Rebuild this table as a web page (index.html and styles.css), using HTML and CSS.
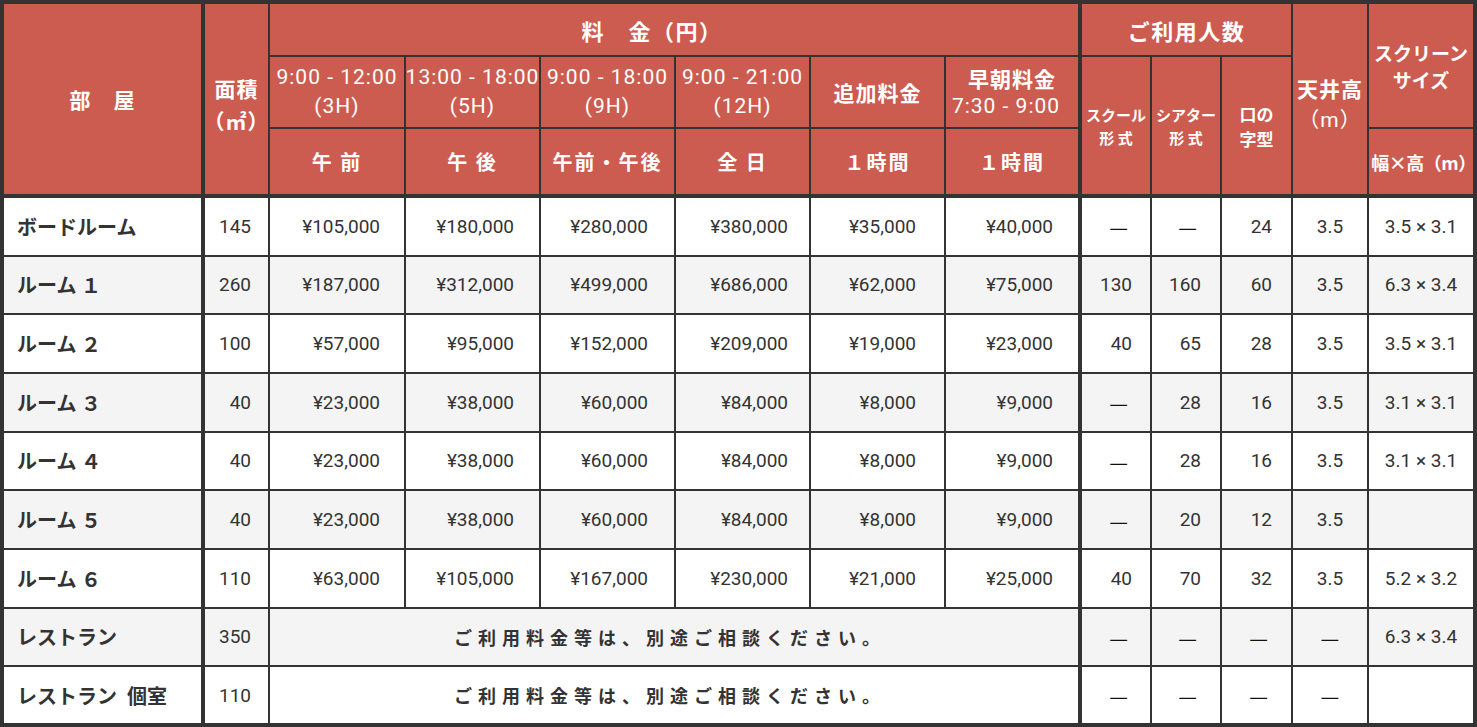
FILE: index.html
```html
<!DOCTYPE html>
<html lang="ja">
<head>
<meta charset="utf-8">
<title>料金表</title>
<link rel="stylesheet" href="styles.css">
</head>
<body>
<div class="rates">
  <div class="head">
    <div class="cell hd tr tb g-room big">部　屋</div>
    <div class="cell hd tb g-area big low">面積<br>（㎡）</div>
    <div class="cell hd tr g-fee top fee">料　金（円）</div>
    <div class="cell hd g-cap top">ご利用人数</div>
    <div class="cell hd tb g-ceil big low">天井高<br><span class="lat">（m）</span></div>
    <div class="cell hd nr g-scr scr">スクリーン<br>サイズ</div>

    <div class="cell hd r2 k3 time">9:00 - 12:00<br>(3H)</div>
    <div class="cell hd r2 k4 time">13:00 - 18:00<br>(5H)</div>
    <div class="cell hd r2 k5 time">9:00 - 18:00<br>(9H)</div>
    <div class="cell hd r2 k6 time">9:00 - 21:00<br>(12H)</div>
    <div class="cell hd r2 k7 big">追加料金</div>
    <div class="cell hd tr r2 k8 big early">早朝料金<br><span class="lat">7:30 - 9:00</span></div>
    <div class="cell hd tb r23 k9 tiny">スクール<br>形 式</div>
    <div class="cell hd tb r23 k10 tiny">シアター<br>形 式</div>
    <div class="cell hd tb r23 k11 small">口の<br>字型</div>

    <div class="cell hd tb r3 k3 sub">午 前</div>
    <div class="cell hd tb r3 k4 sub">午 後</div>
    <div class="cell hd tb r3 k5 sub">午前・午後</div>
    <div class="cell hd tb r3 k6 sub">全 日</div>
    <div class="cell hd tb r3 k7 sub">１時間</div>
    <div class="cell hd tr tb r3 k8 sub">１時間</div>
    <div class="cell hd tb nr r3 k13 wh">幅×高（m）</div>
  </div>

  <div class="row">
    <div class="cell nm">ボードルーム</div><div class="cell ar">145</div>
    <div class="cell p1">¥105,000</div><div class="cell p2">¥180,000</div><div class="cell p3">¥280,000</div><div class="cell p4">¥380,000</div><div class="cell p5">¥35,000</div><div class="cell p6">¥40,000</div>
    <div class="cell s1 dash">—</div><div class="cell s2 dash">—</div><div class="cell s3">24</div><div class="cell ce">3.5</div><div class="cell sc">3.5 × 3.1</div>
  </div>
  <div class="row alt">
    <div class="cell nm">ルーム １</div><div class="cell ar">260</div>
    <div class="cell p1">¥187,000</div><div class="cell p2">¥312,000</div><div class="cell p3">¥499,000</div><div class="cell p4">¥686,000</div><div class="cell p5">¥62,000</div><div class="cell p6">¥75,000</div>
    <div class="cell s1">130</div><div class="cell s2">160</div><div class="cell s3">60</div><div class="cell ce">3.5</div><div class="cell sc">6.3 × 3.4</div>
  </div>
  <div class="row">
    <div class="cell nm">ルーム ２</div><div class="cell ar">100</div>
    <div class="cell p1">¥57,000</div><div class="cell p2">¥95,000</div><div class="cell p3">¥152,000</div><div class="cell p4">¥209,000</div><div class="cell p5">¥19,000</div><div class="cell p6">¥23,000</div>
    <div class="cell s1">40</div><div class="cell s2">65</div><div class="cell s3">28</div><div class="cell ce">3.5</div><div class="cell sc">3.5 × 3.1</div>
  </div>
  <div class="row alt">
    <div class="cell nm">ルーム ３</div><div class="cell ar">40</div>
    <div class="cell p1">¥23,000</div><div class="cell p2">¥38,000</div><div class="cell p3">¥60,000</div><div class="cell p4">¥84,000</div><div class="cell p5">¥8,000</div><div class="cell p6">¥9,000</div>
    <div class="cell s1 dash">—</div><div class="cell s2">28</div><div class="cell s3">16</div><div class="cell ce">3.5</div><div class="cell sc">3.1 × 3.1</div>
  </div>
  <div class="row">
    <div class="cell nm">ルーム ４</div><div class="cell ar">40</div>
    <div class="cell p1">¥23,000</div><div class="cell p2">¥38,000</div><div class="cell p3">¥60,000</div><div class="cell p4">¥84,000</div><div class="cell p5">¥8,000</div><div class="cell p6">¥9,000</div>
    <div class="cell s1 dash">—</div><div class="cell s2">28</div><div class="cell s3">16</div><div class="cell ce">3.5</div><div class="cell sc">3.1 × 3.1</div>
  </div>
  <div class="row alt">
    <div class="cell nm">ルーム ５</div><div class="cell ar">40</div>
    <div class="cell p1">¥23,000</div><div class="cell p2">¥38,000</div><div class="cell p3">¥60,000</div><div class="cell p4">¥84,000</div><div class="cell p5">¥8,000</div><div class="cell p6">¥9,000</div>
    <div class="cell s1 dash">—</div><div class="cell s2">20</div><div class="cell s3">12</div><div class="cell ce">3.5</div><div class="cell sc"></div>
  </div>
  <div class="row">
    <div class="cell nm">ルーム ６</div><div class="cell ar">110</div>
    <div class="cell p1">¥63,000</div><div class="cell p2">¥105,000</div><div class="cell p3">¥167,000</div><div class="cell p4">¥230,000</div><div class="cell p5">¥21,000</div><div class="cell p6">¥25,000</div>
    <div class="cell s1">40</div><div class="cell s2">70</div><div class="cell s3">32</div><div class="cell ce">3.5</div><div class="cell sc">5.2 × 3.2</div>
  </div>
  <div class="row alt">
    <div class="cell nm">レストラン</div><div class="cell ar">350</div>
    <div class="cell note">ご利用料金等は、別途ご相談ください。</div>
    <div class="cell s1 dash">—</div><div class="cell s2 dash">—</div><div class="cell s3 dash">—</div><div class="cell ce dash">—</div><div class="cell sc">6.3 × 3.4</div>
  </div>
  <div class="row last">
    <div class="cell nm">レストラン&ensp;個室</div><div class="cell ar">110</div>
    <div class="cell note">ご利用料金等は、別途ご相談ください。</div>
    <div class="cell s1 dash">—</div><div class="cell s2 dash">—</div><div class="cell s3 dash">—</div><div class="cell ce dash">—</div><div class="cell sc"></div>
  </div>
</div>
</body>
</html>
```
FILE: styles.css
```css
* {
  box-sizing: border-box;
}

body {
  margin: 0;
  background: #ffffff;
  font-family: Roboto, "Noto Sans CJK JP", sans-serif;
  color: #333333;
}

.rates {
  display: grid;
  width: 1477px;
  height: 727px;
  border: 4px solid #333333;
  grid-template-columns: 201px 65px 136px 135px 135px 135px 135px 136px 70px 70px 71px 76px 104px;
  grid-template-rows: 53px 72px 69px repeat(8, 58.67px) 1fr;
}

.head,
.row {
  display: contents;
}

.cell {
  display: flex;
  align-items: center;
  justify-content: center;
  text-align: center;
  border-right: 2px solid #333333;
  border-bottom: 2px solid #333333;
  font-size: 19px;
  background: #ffffff;
  white-space: nowrap;
}

.row.alt .cell {
  background: #f4f4f4;
}

.row.last .cell {
  border-bottom: 0;
}

.tr {
  border-right-width: 4px;
}

.tb {
  border-bottom-width: 4px;
}

.nr {
  border-right: 0;
}

/* header */
.hd {
  background: #cd5c50;
  color: #ffffff;
  font-weight: 700;
  flex-direction: column;
  font-family: "Noto Sans CJK JP", sans-serif;
}

.hd .lat {
  font-family: Roboto, "Noto Sans CJK JP", sans-serif;
  font-weight: 400;
}

.g-room { grid-column: 1; grid-row: 1 / 4; }
.g-area { grid-column: 2; grid-row: 1 / 4; }
.g-fee { grid-column: 3 / 9; grid-row: 1; }
.g-cap { grid-column: 9 / 12; grid-row: 1; }
.g-ceil { grid-column: 12; grid-row: 1 / 4; }
.g-scr { grid-column: 13; grid-row: 1 / 3; }

.r2 { grid-row: 2; }
.r3 { grid-row: 3; }
.r23 { grid-row: 2 / 4; }
.k3 { grid-column: 3; }
.k4 { grid-column: 4; }
.k5 { grid-column: 5; }
.k6 { grid-column: 6; }
.k7 { grid-column: 7; }
.k8 { grid-column: 8; }
.k9 { grid-column: 9; }
.k10 { grid-column: 10; }
.k11 { grid-column: 11; }
.k13 { grid-column: 13; }

.big {
  font-size: 21px;
  line-height: 32px;
  letter-spacing: 1px;
}

.low {
  padding-top: 10px;
}

.top {
  font-size: 22px;
  letter-spacing: 1.5px;
}

.fee {
  padding-right: 44px;
}

.scr {
  font-size: 19px;
  line-height: 27px;
}

.time {
  font-family: Roboto, sans-serif;
  font-weight: 400;
  font-size: 21px;
  line-height: 29px;
  letter-spacing: 1px;
}

.early {
  line-height: 28px;
}

.early .lat {
  margin-right: 12px;
}

.tiny {
  font-size: 15px;
  line-height: 23px;
}

.small {
  font-size: 17px;
  line-height: 25px;
}

.sub {
  font-size: 20px;
  letter-spacing: 2px;
}

.wh {
  font-size: 18px;
  letter-spacing: -0.5px;
  padding-left: 5px;
}

/* body */
.nm {
  justify-content: flex-start;
  padding-left: 13px;
  font-weight: 700;
  font-size: 20px;
  font-family: "Noto Sans CJK JP", sans-serif;
  border-right-width: 4px;
}

.ar { justify-content: flex-end; padding-right: 17px; }
.p1 { justify-content: flex-end; padding-right: 24px; }
.p2 { justify-content: flex-end; padding-right: 25px; }
.p3 { justify-content: flex-end; padding-right: 26px; }
.p4 { justify-content: flex-end; padding-right: 21px; }
.p5 { justify-content: flex-end; padding-right: 28px; }
.p6 { justify-content: flex-end; padding-right: 25px; border-right-width: 4px; }
.s1 { justify-content: flex-end; padding-right: 18px; }
.s2 { justify-content: flex-end; padding-right: 19px; }
.s3 { justify-content: flex-end; padding-right: 19px; }
.ce { justify-content: center; }
.sc { justify-content: center; border-right: 0; }

.dash {
  color: #111111;
  font-family: "Noto Sans CJK JP", sans-serif;
  font-size: 21px;
}

.s1.dash { padding-right: 22px; }
.s2.dash,
.s3.dash { padding-right: 23px; }

.note {
  grid-column: span 6;
  border-right-width: 4px;
  font-family: "Noto Sans CJK JP", sans-serif;
  font-weight: 700;
  font-size: 18px;
  letter-spacing: 6px;
  padding-right: 8px;
}
```
